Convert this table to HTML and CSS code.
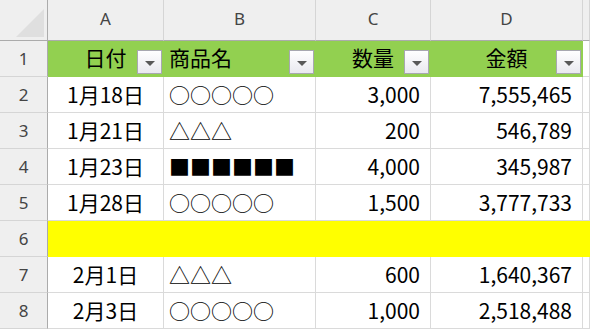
FILE: index.html
```html
<!DOCTYPE html>
<html lang="ja">
<head>
<meta charset="utf-8">
<link rel="stylesheet" href="styles.css">
</head>
<body>
<div class="sheet">
  <div class="hd corner"><svg class="tri" width="48" height="41" viewBox="0 0 48 41"><polygon points="16,37 44,9 44,37" fill="#dfdfdf"/></svg></div>
  <div class="hd col">A</div>
  <div class="hd col">B</div>
  <div class="hd col">C</div>
  <div class="hd col">D</div>
  <div class="hd col last"></div>

  <div class="hd row">1</div>
  <div class="c th center">日付<span class="fb"><span class="ar"></span></span></div>
  <div class="c th left">商品名<span class="fb"><span class="ar"></span></span></div>
  <div class="c th center">数量<span class="fb"><span class="ar"></span></span></div>
  <div class="c th center">金額<span class="fb"><span class="ar"></span></span></div>
  <div class="c"></div>

  <div class="hd row">2</div>
  <div class="c center">1月18日</div>
  <div class="c left">○○○○○</div>
  <div class="c right">3,000</div>
  <div class="c right">7,555,465</div>
  <div class="c"></div>

  <div class="hd row">3</div>
  <div class="c center">1月21日</div>
  <div class="c left">△△△</div>
  <div class="c right">200</div>
  <div class="c right">546,789</div>
  <div class="c"></div>

  <div class="hd row">4</div>
  <div class="c center">1月23日</div>
  <div class="c left">■■■■■■</div>
  <div class="c right">4,000</div>
  <div class="c right">345,987</div>
  <div class="c"></div>

  <div class="hd row">5</div>
  <div class="c center">1月28日</div>
  <div class="c left">○○○○○</div>
  <div class="c right">1,500</div>
  <div class="c right">3,777,733</div>
  <div class="c"></div>

  <div class="hd row">6</div>
  <div class="c hl"></div>
  <div class="c hl"></div>
  <div class="c hl"></div>
  <div class="c hl"></div>
  <div class="c hl"></div>

  <div class="hd row">7</div>
  <div class="c center">2月1日</div>
  <div class="c left">△△△</div>
  <div class="c right">600</div>
  <div class="c right">1,640,367</div>
  <div class="c"></div>

  <div class="hd row">8</div>
  <div class="c center">2月3日</div>
  <div class="c left">○○○○○</div>
  <div class="c right">1,000</div>
  <div class="c right">2,518,488</div>
  <div class="c"></div>

  <div class="hd row"></div>
  <div class="c"></div>
  <div class="c"></div>
  <div class="c"></div>
  <div class="c"></div>
  <div class="c"></div>
</div>
</body>
</html>
```
FILE: styles.css
```css
html, body {
  margin: 0;
  padding: 0;
  background: #ffffff;
  overflow: hidden;
}

.sheet {
  display: grid;
  grid-template-columns: 48px 116px 152px 115px 152px 1fr;
  grid-template-rows: 41px repeat(9, 36px);
  width: 590px;
  height: 329px;
  overflow: hidden;
}

.hd {
  box-sizing: border-box;
  background: #efefef;
  color: #444444;
  font-family: "Noto Sans", "Open Sans", sans-serif;
  font-size: 17px;
  display: flex;
  align-items: center;
  justify-content: center;
  border-right: 1px solid #d5d5d5;
  border-bottom: 1px solid #d5d5d5;
}

.hd.col {
  border-bottom-color: #ababab;
  padding-bottom: 3px;
}

.hd.row {
  border-right-color: #ababab;
}

.hd.corner {
  border-right-color: #ababab;
  border-bottom-color: #ababab;
  position: relative;
}

.tri {
  position: absolute;
  left: 0;
  top: 0;
}

.c {
  box-sizing: border-box;
  border-right: 1px solid #dadada;
  border-bottom: 1px solid #dadada;
  font-family: "Noto Sans CJK JP", "Noto Sans", sans-serif;
  font-size: 21px;
  line-height: 1;
  color: #000000;
  display: flex;
  align-items: center;
  white-space: nowrap;
  overflow: hidden;
  position: relative;
}

.center { justify-content: center; }
.left { justify-content: flex-start; padding-left: 5px; }
.right { justify-content: flex-end; padding-right: 10px; }

.th {
  background: #92d050;
  border-color: #92d050;
  padding-bottom: 3px;
}

.hl {
  background: #ffff00;
  border-color: #ffff00;
}

.fb {
  position: absolute;
  right: 1px;
  bottom: 2px;
  width: 25px;
  height: 24px;
  box-sizing: border-box;
  border: 1px solid #a8a8b0;
  background: linear-gradient(#ffffff, #e9e9ef);
  display: flex;
  align-items: center;
  justify-content: center;
}

.ar {
  width: 0;
  height: 0;
  border-left: 5px solid transparent;
  border-right: 5px solid transparent;
  border-top: 5px solid #595959;
  margin-top: 2px;
}
```
